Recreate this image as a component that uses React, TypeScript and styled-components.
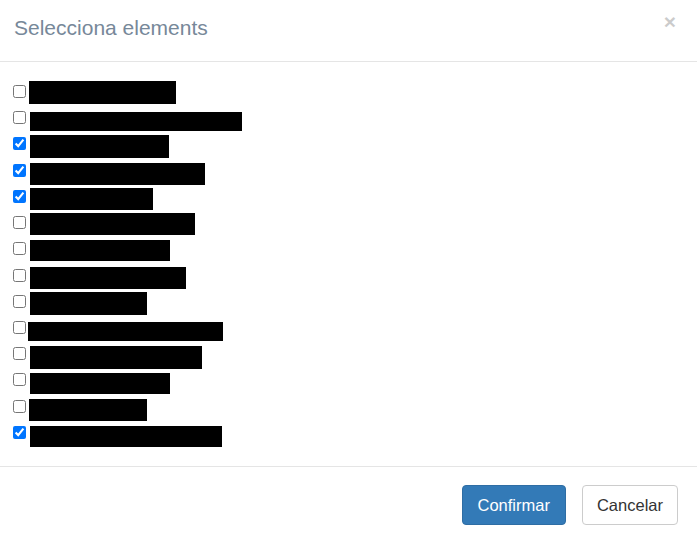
import React from "react";
import styled, { createGlobalStyle } from "styled-components";

const Global = createGlobalStyle`
  html, body { margin: 0; padding: 0; background: #fff; }
  body { font-family: "Liberation Sans", Arial, sans-serif; color: #333; }
`;

const Modal = styled.div`
  width: 697px;
  height: 543px;
  display: flex;
  flex-direction: column;
  background: #fff;
`;

const Header = styled.div`
  height: 62px;
  box-sizing: border-box;
  border-bottom: 1px solid #e5e5e5;
  padding: 0 21px 6px 14px;
  display: flex;
  align-items: center;
  justify-content: space-between;
`;

const Title = styled.h4`
  margin: 0;
  font-size: 21px;
  font-weight: normal;
  color: #778899;
  line-height: 1.2;
`;

const Close = styled.button`
  border: 0;
  background: transparent;
  padding: 0;
  margin-top: -13px;
  font-family: "Liberation Sans", Arial, sans-serif;
  font-size: 21px;
  font-weight: bold;
  line-height: 1;
  color: #000;
  opacity: 0.2;
  cursor: pointer;
`;

const Body = styled.div`
  flex: 1;
  padding: 17px 0 0 13px;
  display: flex;
  flex-direction: column;
`;

const Row = styled.label`
  height: 26.23px;
  display: flex;
  align-items: flex-start;
`;

const Check = styled.input`
  width: 13px;
  height: 13px;
  margin: 6px 0 0 0;
  flex: none;
`;

const Redacted = styled.span<{ $w: number; $h: number; $top: number; $left: number }>`
  display: block;
  background: #000;
  width: ${(p) => p.$w}px;
  height: ${(p) => p.$h}px;
  margin-top: ${(p) => p.$top}px;
  margin-left: ${(p) => p.$left}px;
`;

const Footer = styled.div`
  border-top: 1px solid #e5e5e5;
  padding: 18px 19px 18px 15px;
  display: flex;
  justify-content: flex-end;
  gap: 16px;
`;

const Button = styled.button<{ $primary?: boolean }>`
  height: 40px;
  box-sizing: border-box;
  padding: 0 ${(p) => (p.$primary ? "15px" : "14px")};
  border-radius: 4px;
  font-family: "Liberation Sans", Arial, sans-serif;
  font-size: 16.5px;
  cursor: pointer;
  border: 1px solid ${(p) => (p.$primary ? "#2e6da4" : "#ccc")};
  background: ${(p) => (p.$primary ? "#337ab7" : "#fff")};
  color: ${(p) => (p.$primary ? "#fff" : "#333")};
`;

const items = [
  { w: 147, h: 23, top: 2, left: 3, checked: false },
  { w: 212, h: 19, top: 7, left: 4, checked: false },
  { w: 139, h: 23, top: 3.5, left: 4, checked: true },
  { w: 175, h: 22, top: 5, left: 4, checked: true },
  { w: 123, h: 22, top: 4, left: 4, checked: true },
  { w: 165, h: 22, top: 3, left: 4, checked: false },
  { w: 140, h: 21, top: 3.6, left: 4, checked: false },
  { w: 156, h: 22, top: 4.4, left: 4, checked: false },
  { w: 117, h: 23, top: 3, left: 4, checked: false },
  { w: 195, h: 19, top: 7, left: 2, checked: false },
  { w: 172, h: 23, top: 4.7, left: 4, checked: false },
  { w: 140, h: 21, top: 5.5, left: 4, checked: false },
  { w: 118, h: 22, top: 5, left: 3, checked: false },
  { w: 192, h: 21, top: 6, left: 4, checked: true },
];

export default function App() {
  return (
    <>
      <Global />
      <Modal>
        <Header>
          <Title>Selecciona elements</Title>
          <Close aria-label="Close">×</Close>
        </Header>
        <Body>
          {items.map((it, i) => (
            <Row key={i}>
              <Check type="checkbox" defaultChecked={it.checked} />
              <Redacted $w={it.w} $h={it.h} $top={it.top} $left={it.left} />
            </Row>
          ))}
        </Body>
        <Footer>
          <Button $primary>Confirmar</Button>
          <Button>Cancelar</Button>
        </Footer>
      </Modal>
    </>
  );
}
